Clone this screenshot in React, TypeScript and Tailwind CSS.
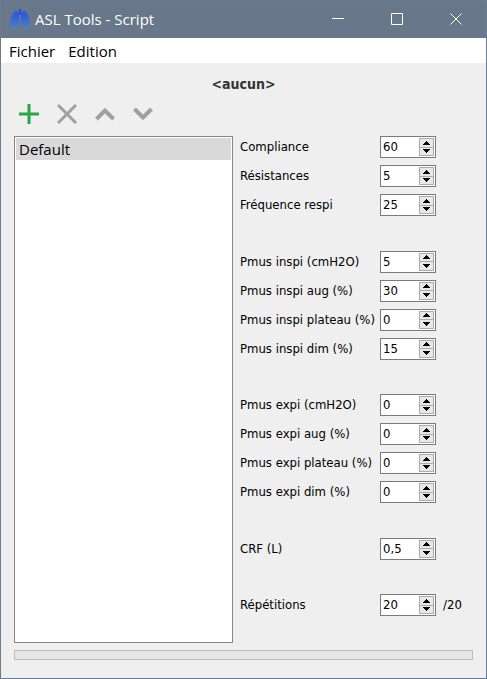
import { useState } from "react";

type Field = { id: string; label: string; value: string; step: number; suffix?: string };

const groups: Field[][] = [
  [
    { id: "compliance", label: "Compliance", value: "60", step: 1 },
    { id: "resistances", label: "Résistances", value: "5", step: 1 },
    { id: "frequence", label: "Fréquence respi", value: "25", step: 1 },
  ],
  [
    { id: "inspi", label: "Pmus inspi (cmH2O)", value: "5", step: 1 },
    { id: "inspi-aug", label: "Pmus inspi aug (%)", value: "30", step: 1 },
    { id: "inspi-plateau", label: "Pmus inspi plateau (%)", value: "0", step: 1 },
    { id: "inspi-dim", label: "Pmus inspi dim (%)", value: "15", step: 1 },
  ],
  [
    { id: "expi", label: "Pmus expi (cmH2O)", value: "0", step: 1 },
    { id: "expi-aug", label: "Pmus expi aug (%)", value: "0", step: 1 },
    { id: "expi-plateau", label: "Pmus expi plateau (%)", value: "0", step: 1 },
    { id: "expi-dim", label: "Pmus expi dim (%)", value: "0", step: 1 },
  ],
  [{ id: "crf", label: "CRF (L)", value: "0,5", step: 0.1 }],
  [{ id: "repetitions", label: "Répétitions", value: "20", step: 1, suffix: "/20" }],
];

function SpinRow({ field }: { field: Field }) {
  const [value, setValue] = useState(field.value);
  const change = (delta: number) => {
    const next = Math.max(0, Number(value.replace(",", ".")) + delta);
    setValue(String(Math.round(next * 10) / 10).replace(".", ","));
  };
  return (
    <div className="flex h-[22px] items-center">
      <label htmlFor={field.id} className="w-[140px] shrink-0 whitespace-nowrap">
        {field.label}
      </label>
      <div className="flex h-[22px] w-14 shrink-0 border border-[#7a7a7a] bg-white">
        <input
          id={field.id}
          value={value}
          inputMode="decimal"
          onChange={(e) => setValue(e.target.value)}
          className="w-0 min-w-0 flex-1 bg-transparent pl-0.5 outline-none"
        />
        <div className="my-px mr-px flex w-[15px] flex-col border border-[#acacac] bg-[#e8e8e8]">
          <button
            type="button"
            aria-label={`Augmenter ${field.label}`}
            onClick={() => change(field.step)}
            className="flex flex-1 items-center justify-center border-b border-[#acacac]"
          >
            <svg width="7" height="4" viewBox="0 0 7 4" shapeRendering="crispEdges">
              <path d="M3 0h1v1h1v1h1v1h1v1H0V3h1V2h1V1h1z" />
            </svg>
          </button>
          <button
            type="button"
            aria-label={`Diminuer ${field.label}`}
            onClick={() => change(-field.step)}
            className="flex flex-1 items-center justify-center"
          >
            <svg width="7" height="4" viewBox="0 0 7 4" shapeRendering="crispEdges">
              <path d="M0 0h7v1H6v1H5v1H4v1H3V3H2V2H1V1H0z" />
            </svg>
          </button>
        </div>
      </div>
      {field.suffix && <span className="ml-[7px]">{field.suffix}</span>}
    </div>
  );
}

function Lungs() {
  return (
    <svg width="20" height="20" viewBox="0 0 20 20" aria-hidden="true">
      <defs>
        <linearGradient id="lung" x1="0" y1="0" x2="0" y2="1">
          <stop offset="0" stopColor="#2058f0" />
          <stop offset="0.5" stopColor="#3569d2" />
          <stop offset="1" stopColor="#5583b4" />
        </linearGradient>
      </defs>
      <path
        fill="url(#lung)"
        d="M6 2C4 2 2 6 1.200 9.500C.4 13 0 17 .3 19.700C3 19.500 7 19 8.800 17C9.300 14 9.400 10 9 7C8.600 4.500 8 2 6 2zM14 2C16 2 18 6 18.800 9.500C19.600 13 20 17 19.700 19.700C17 19.500 13 19 11.200 17C10.700 14 10.600 10 11 7C11.400 4.500 12 2 14 2z"
      />
      <path d="M9 0h2v4l1.500 1-.6 1L10 5 8.100 6l-.6-1L9 4z" fill="#1c4fe8" />
    </svg>
  );
}

const tools = [
  { name: "Ajouter", path: "M10 0v20M0 10h20", color: "#28a745", width: 3 },
  { name: "Supprimer", path: "M1 1l18 18M19 1L1 19", color: "#a0a0a0", width: 3 },
  { name: "Monter", path: "M1.500 15l8.500-8.500 8.500 8.500", color: "#a0a0a0", width: 4 },
  { name: "Descendre", path: "M1.500 5l8.500 8.500 8.500-8.500", color: "#a0a0a0", width: 4 },
];

const windowControls = [
  { name: "Réduire", path: "M0 5.500h12" },
  { name: "Agrandir", path: "M.5 .5h11v11H.5z" },
  { name: "Fermer", path: "M.5 .5l11 11M11.500 .5l-11 11" },
];

export default function App() {
  return (
    <div className="flex min-h-screen flex-col border border-[#6b7b8f] bg-[#efefef] font-['DejaVu_Sans_Condensed','DejaVu_Sans',sans-serif] text-black">
      <header className="flex h-[37px] items-center bg-[#68778a] pr-px pb-px pl-[9px] text-white">
        <Lungs />
        <h1 className="ml-[5px] flex-1 font-['Open_Sans',sans-serif] text-[15px] leading-5">ASL Tools - Script</h1>
        <div className="flex h-full">
          {windowControls.map((c) => (
            <button key={c.name} type="button" aria-label={c.name} className="flex w-[59px] items-center justify-center">
              <svg width="12" height="12" viewBox="0 0 12 12" fill="none" stroke="white">
                <path d={c.path} />
              </svg>
            </button>
          ))}
        </div>
      </header>
      <nav className="flex h-[25px] items-center gap-[13px] bg-white px-2 font-['Open_Sans',sans-serif] text-[15px] leading-5">
        <button type="button">Fichier</button>
        <button type="button">Edition</button>
      </nav>
      <main className="flex flex-1 flex-col px-[13px] pb-[18px]">
        <h2 className="mt-[11px] text-center text-[14px] leading-5 font-bold text-[#333]">&lt;aucun&gt;</h2>
        <div className="mt-2.5 flex gap-[18px] pl-[5px]">
          {tools.map((t) => (
            <button key={t.name} type="button" aria-label={t.name}>
              <svg width="20" height="20" viewBox="0 0 20 20" fill="none" stroke={t.color} strokeWidth={t.width}>
                <path d={t.path} />
              </svg>
            </button>
          ))}
        </div>
        <div className="mt-3 grid flex-1 grid-cols-[minmax(0,1fr)_233px] gap-[7px]">
          <ul className="border border-[#828790] bg-white p-px">
            <li>
              <button type="button" className="block h-[22px] w-full bg-[#d9d9d9] pl-[3px] text-left font-['Open_Sans',sans-serif] text-[15px] leading-[22px]">
                Default
              </button>
            </li>
          </ul>
          <form className="flex flex-col justify-between pb-[27px] text-[13px] leading-4" onSubmit={(e) => e.preventDefault()}>
            {groups.map((fields) => (
              <div key={fields[0].id} className="flex flex-col gap-[7px]">
                {fields.map((f) => (
                  <SpinRow key={f.id} field={f} />
                ))}
              </div>
            ))}
          </form>
        </div>
        <div
          role="progressbar"
          aria-label="Progression"
          aria-valuenow={0}
          className="mt-[7px] h-2.5 border border-[#bcbcbc] bg-[#e6e6e6]"
        />
      </main>
    </div>
  );
}
